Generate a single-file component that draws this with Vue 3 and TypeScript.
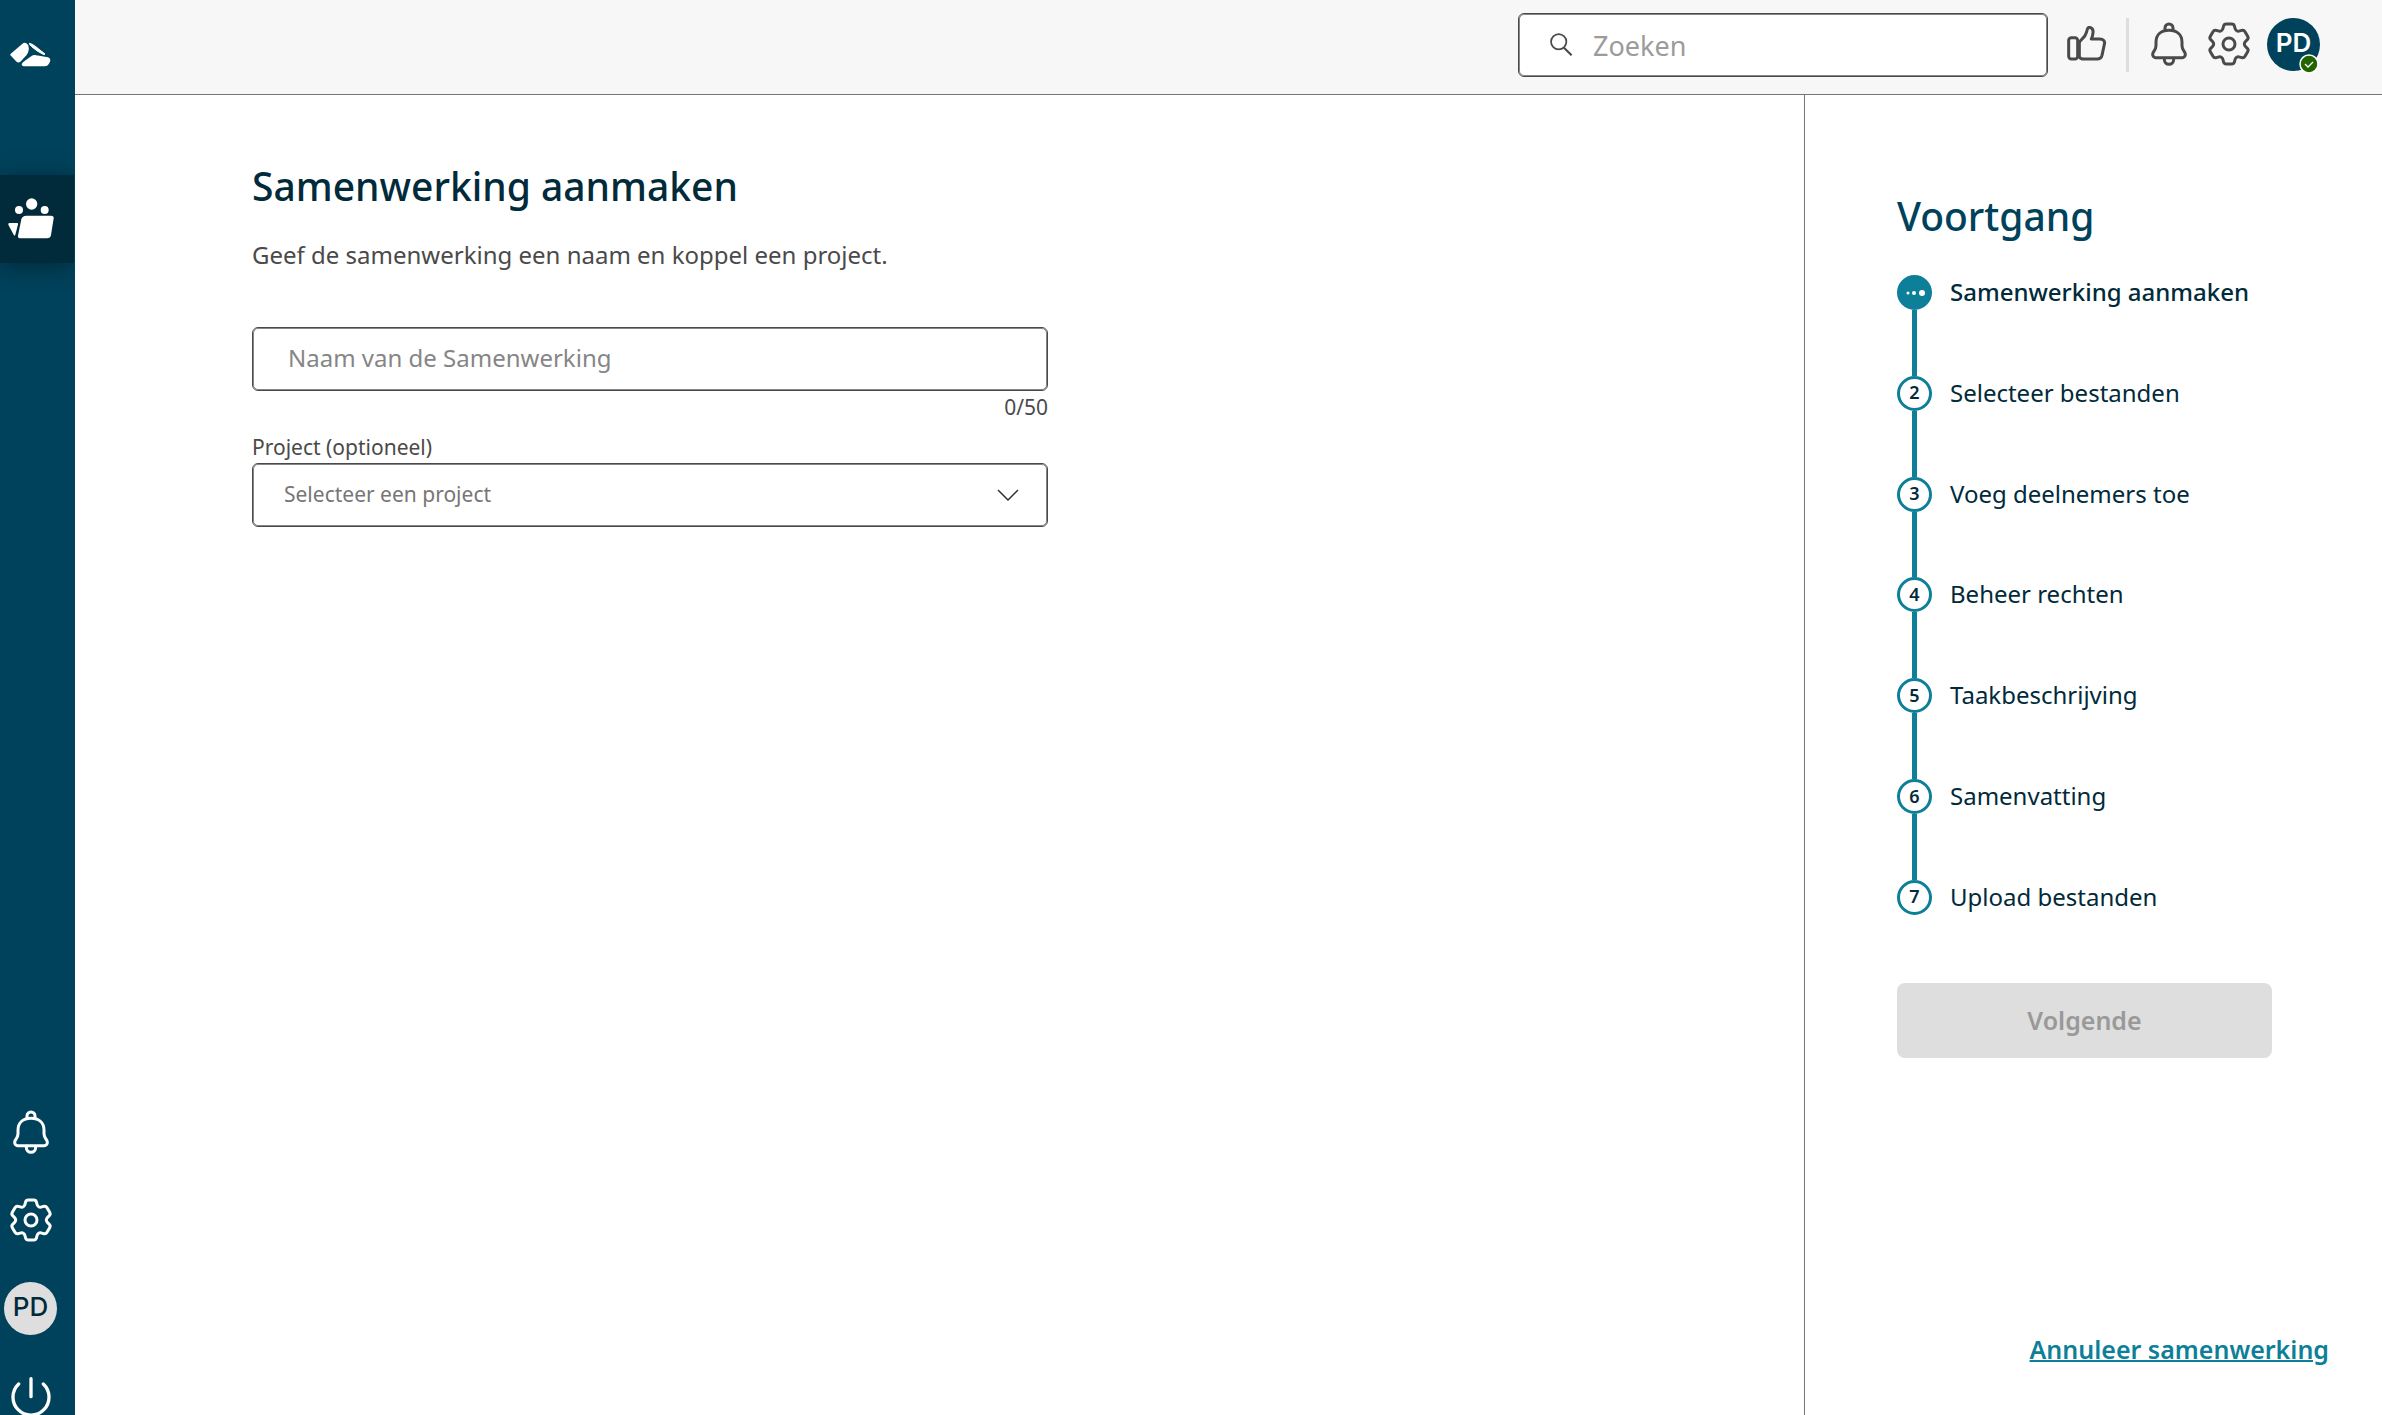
<script setup lang="ts">
import { computed, ref } from 'vue'

const maxLength = 50
const name = ref('')
const project = ref('')
const search = ref('')
const counter = computed(() => `${name.value.length}/${maxLength}`)

const steps = [
  'Samenwerking aanmaken',
  'Selecteer bestanden',
  'Voeg deelnemers toe',
  'Beheer rechten',
  'Taakbeschrijving',
  'Samenvatting',
  'Upload bestanden',
]
const current = 0

// Six-toothed cog outline, centred on the origin, with softened corners.
function cogPath(): string {
  const profile = [
    [-19, -42, 6],
    [-15, -60, 7],
    [15, -60, 7],
    [19, -42, 6],
  ]
  const points: number[][] = []
  for (let k = 0; k < 6; k++) {
    const a = (k * Math.PI) / 3
    for (const [x, y, r] of profile) {
      points.push([x * Math.cos(a) - y * Math.sin(a), x * Math.sin(a) + y * Math.cos(a), r])
    }
  }
  const toward = (from: number[], to: number[], d: number) => {
    const len = Math.hypot(to[0] - from[0], to[1] - from[1])
    const t = Math.min(d / len, 0.5)
    return `${(from[0] + (to[0] - from[0]) * t).toFixed(1)} ${(from[1] + (to[1] - from[1]) * t).toFixed(1)}`
  }
  const n = points.length
  return (
    points
      .map((p, i) => {
        const before = toward(p, points[(i + n - 1) % n], p[2])
        const after = toward(p, points[(i + 1) % n], p[2])
        return `${i ? 'L' : 'M'}${before}Q${p[0].toFixed(1)} ${p[1].toFixed(1)} ${after}`
      })
      .join('') + 'Z'
  )
}
const cog = cogPath()
const bell =
  'M14 60C14 36 30 24 53 24S92 36 92 60V70C92 78 95 82 99 88C105 97 101 106 92 106H14C5 106 1 97 7 88C11 82 14 78 14 70ZM41 24V17a12 12 0 0 1 24 0V24M39 107v4c0 9 6 15 14 15s14-6 14-15v-4'
</script>

<template>
  <div class="app">
    <nav class="sidebar" aria-label="Hoofdnavigatie">
      <a class="logo" href="#" aria-label="Start">
        <svg width="41" height="25" viewBox="0 0 123 75" fill="#fff" stroke="#fff" stroke-linejoin="round">
          <path stroke-width="8" d="M5 38 39 9Q44 5 48 8Q54 12 52 24Q51 30 47 36L29 56Q25 59 21 55Z" />
          <path stroke-width="3" d="M58 4Q66 5 76 13L105 36Q104 39 98 36Q82 29 65 14Q58 8 58 4Z" />
          <path stroke-width="5" d="M38 66Q40 62 45 59L66 44Q71 40 79 42L113 48Q120 50 118 57Q114 70 104 70H42Q37 70 38 66Z" />
        </svg>
      </a>
      <a class="nav-item active" href="#" aria-label="Samenwerkingen">
        <svg width="46" height="42" viewBox="0 0 138 126" fill="#fff">
          <circle cx="71" cy="18" r="17" />
          <circle cx="33" cy="36" r="12" />
          <circle cx="110" cy="36" r="12" />
          <path d="M55 53H129Q138 53 137 61L129 111Q127 121 117 121H38Q29 121 30 113L40 64Q43 53 55 53Z" />
          <path d="M4 75H27Q31 75 30 79L22 110Q20 115 17 110L1 80Q0 75 4 75Z" />
        </svg>
      </a>
      <div class="nav-bottom">
        <button class="nav-item" type="button" aria-label="Meldingen">
          <svg class="line" width="36" height="44" viewBox="-1 -1 108 132"><path :d="bell" /></svg>
        </button>
        <button class="nav-item" type="button" aria-label="Instellingen">
          <svg class="line" width="44" height="44" viewBox="-66 -66 132 132"><path :d="cog" /><circle r="18" /></svg>
        </button>
        <button class="nav-item" type="button" aria-label="Profiel">
          <span class="avatar light">PD</span>
        </button>
        <button class="nav-item" type="button" aria-label="Uitloggen">
          <svg class="line" width="40" height="40" viewBox="-60 -62 120 120">
            <path stroke-width="10" d="M0-54V0M-37-38A54 54 0 1 0 37-38" />
          </svg>
        </button>
      </div>
    </nav>

    <div class="page">
      <header class="topbar">
        <label class="search">
          <svg width="23" height="23" viewBox="0 0 66 66" fill="none" stroke="#4a4a4a" stroke-width="5">
            <circle cx="25" cy="25" r="22" /><path d="M40 42 62 64" stroke-width="6" />
          </svg>
          <input v-model="search" type="search" placeholder="Zoeken" aria-label="Zoeken" />
        </label>
        <button class="icon-button like" type="button" aria-label="Feedback">
          <svg class="line" width="40" height="36" viewBox="0 0 120 108">
            <rect x="5" y="35" width="27" height="64" rx="8" />
            <path d="M37 93V50C37 41 54 38 58 20L61 10C63 4 67 3 71 5C77 8 79 13 78 20C77 28 76 34 73 39H98C109 39 115 46 112 55L105 88C103 96 98 99 91 99H50C43 99 39 97 37 93Z" />
          </svg>
        </button>
        <span class="divider"></span>
        <button class="icon-button" type="button" aria-label="Meldingen">
          <svg class="line" width="36" height="44" viewBox="-1 -1 108 132"><path :d="bell" /></svg>
        </button>
        <button class="icon-button cog" type="button" aria-label="Instellingen">
          <svg class="line" width="44" height="44" viewBox="-66 -66 132 132"><path :d="cog" /><circle r="18" /></svg>
        </button>
        <button class="icon-button profile" type="button" aria-label="Profiel">
          <span class="avatar dark">PD</span>
          <svg class="status" width="20" height="20" viewBox="0 0 20 20">
            <circle cx="10" cy="10" r="9" fill="#236300" stroke="#fff" stroke-width="1.5" />
            <path d="m6 10 3 3 5-5" fill="none" stroke="#fff" stroke-width="1.3" />
          </svg>
        </button>
      </header>

      <div class="columns">
        <main class="content">
          <form class="form" @submit.prevent>
            <h1>Samenwerking aanmaken</h1>
            <p class="intro">Geef de samenwerking een naam en koppel een project.</p>
            <input v-model="name" class="field name" type="text" :maxlength="maxLength" placeholder="Naam van de Samenwerking" aria-label="Naam van de Samenwerking" />
            <span class="counter">{{ counter }}</span>
            <label class="label" for="project">Project (optioneel)</label>
            <div class="select">
              <select id="project" v-model="project" class="field">
                <option value="">Selecteer een project</option>
              </select>
              <svg width="22" height="12" viewBox="0 0 22 12" fill="none" stroke="#333" stroke-width="1.5"><path d="M1 1 11 11 21 1" /></svg>
            </div>
          </form>
        </main>

        <aside class="progress">
          <h2>Voortgang</h2>
          <ol class="steps">
            <li v-for="(step, i) in steps" :key="step" class="step" :class="{ current: i === current }">
              <span class="track">
                <span class="marker">
                  <svg v-if="i === current" width="20" height="8" viewBox="0 0 20 8" fill="#fff">
                    <circle cx="3" cy="4" r="1.5" /><circle cx="9" cy="4" r="2" /><circle cx="17" cy="4" r="3" />
                  </svg>
                  <template v-else>{{ i + 1 }}</template>
                </span>
                <span v-if="i < steps.length - 1" class="connector"></span>
              </span>
              <span class="step-name">{{ step }}</span>
            </li>
          </ol>
          <button class="next" type="button" disabled>Volgende</button>
          <a class="cancel" href="#">Annuleer samenwerking</a>
        </aside>
      </div>
    </div>
  </div>
</template>

<style>
body {
  margin: 0;
  background: #fff;
}
</style>

<style scoped>
.app {
  display: flex;
  height: 100vh;
  overflow: hidden;
  font-family: "Noto Sans", sans-serif;
  font-size: 24px;
  color: #012a3a;
}
.app * {
  box-sizing: border-box;
}
button {
  font: inherit;
  border: 0;
  padding: 0;
  background: none;
}
svg {
  display: block;
  flex: none;
}
.line {
  fill: none;
  stroke: currentColor;
  stroke-width: 9;
  stroke-linecap: round;
  stroke-linejoin: round;
}

.sidebar {
  flex: none;
  display: flex;
  flex-direction: column;
  width: 75px;
  background: #00425b;
  color: #fff;
}
.logo {
  display: flex;
  justify-content: center;
  height: 175px;
  padding: 42px 14px 0 0;
}
.nav-item {
  display: flex;
  align-items: center;
  justify-content: center;
  width: 74px;
  height: 88px;
  padding-right: 13px;
  color: inherit;
}
.active {
  background: #012a3a;
  box-shadow: 0 4px 24px #012a3a;
  clip-path: inset(-30px 0);
}
.nav-bottom {
  margin-top: auto;
  margin-bottom: -25px;
}
.avatar {
  display: flex;
  align-items: center;
  justify-content: center;
  width: 53px;
  height: 53px;
  flex: none;
  border-radius: 50%;
  font-family: Inter, sans-serif;
  font-size: 26px;
  line-height: 49px;
  padding-bottom: 4px;
}
.light {
  background: #dedede;
  color: #012a3a;
  font-weight: 500;
}
.dark {
  background: #00425b;
  color: #fff;
  font-weight: 600;
}

.page {
  flex: 1;
  min-width: 0;
  display: flex;
  flex-direction: column;
}
.topbar {
  flex: none;
  display: flex;
  align-items: center;
  justify-content: flex-end;
  height: 95px;
  padding: 0 62px 5px 0;
  background: #f7f7f7;
  border-bottom: 1px solid #767676;
  color: #4a4a4a;
}
.topbar .line {
  margin-bottom: 2px;
}
.search {
  display: flex;
  align-items: center;
  gap: 20px;
  width: 530px;
  height: 64px;
  padding-left: 31px;
  border: 1px solid #4a4a4a;
  outline: 1px solid #4a4a4aaa;
  outline-offset: -2px;
  border-radius: 6px;
  background: #fff;
}
.search input {
  flex: 1;
  min-width: 0;
  border: 0;
  padding: 2px 0 0;
  outline: 0;
  background: none;
  font: 27px/36px "Noto Sans", sans-serif;
  color: #012a3a;
}
.search input::placeholder {
  color: #9b9b9b;
}
.icon-button {
  position: relative;
  color: inherit;
}
.like {
  margin: 0 19px;
}
.divider {
  width: 3px;
  height: 54px;
  margin-right: 22px;
  background: #dedede;
}
.cog {
  margin: 0 16px 0 20px;
}
.status {
  position: absolute;
  right: 1px;
  bottom: -3px;
}

.columns {
  flex: 1;
  display: flex;
  min-height: 0;
}
.content {
  flex: 1;
  padding: 64px 177px 0;
}
.form {
  display: flex;
  flex-direction: column;
  max-width: 796px;
}
h1,
h2 {
  margin: 0;
  font-size: 39px;
  line-height: 54px;
  font-weight: 500;
}
.intro {
  margin: 24px 0 54px;
  line-height: 36px;
  color: #4a4a4a;
}
.field {
  width: 100%;
  height: 64px;
  border: 1px solid #4a4a4a;
  outline: 1px solid #4a4a4aaa;
  outline-offset: -2px;
  border-radius: 6px;
  background: #fff;
  font: 21px/30px "Noto Sans", sans-serif;
  color: #767676;
}
.name {
  padding: 0 36px 4px 35px;
  font-size: 24px;
}
.name::placeholder {
  color: #868686;
}
.counter {
  align-self: flex-end;
  font-size: 21px;
  line-height: 32px;
  color: #4a4a4a;
}
.label {
  margin-top: 8px;
  font-size: 21px;
  line-height: 32px;
  color: #4a4a4a;
}
.select {
  display: grid;
  align-items: center;
}
.select > * {
  grid-area: 1 / 1;
}
.select select {
  appearance: none;
  padding: 0 60px 2px 31px;
}
.select svg {
  justify-self: end;
  margin-right: 29px;
  pointer-events: none;
}

.progress {
  flex: none;
  display: flex;
  flex-direction: column;
  width: 578px;
  padding: 94px 53px 48px 92px;
  border-left: 1px solid #767676;
}
h2 {
  color: #00425b;
  margin-bottom: 32px;
}
.steps {
  display: flex;
  flex-direction: column;
  height: 640px;
  margin: 0;
  padding: 0;
  list-style: none;
}
.step {
  flex: 1;
  display: flex;
  gap: 18px;
}
.step:last-child {
  flex: none;
}
.track {
  display: flex;
  flex-direction: column;
  align-items: center;
}
.marker {
  flex: none;
  display: flex;
  align-items: center;
  justify-content: center;
  width: 35px;
  height: 35px;
  padding-bottom: 2px;
  border: 3px solid #0e7f99;
  border-radius: 50%;
  font-size: 18px;
  line-height: 24px;
  font-weight: 600;
}
.current .marker {
  padding: 0;
  background: #0e7f99;
}
.connector {
  flex: 1;
  width: 5px;
  background: #0e7f99;
}
.step-name {
  line-height: 34px;
}
.current .step-name {
  font-weight: 500;
}
.next {
  flex: none;
  width: 375px;
  height: 75px;
  margin-top: 68px;
  padding-bottom: 2px;
  border-radius: 8px;
  background: #dedede;
  color: #999;
  font-size: 25px;
  font-weight: 600;
}
.cancel {
  align-self: flex-end;
  margin-top: auto;
  font-size: 25px;
  line-height: 36px;
  font-weight: 600;
  color: #0e7f99;
  text-decoration-thickness: 2px;
}
</style>
